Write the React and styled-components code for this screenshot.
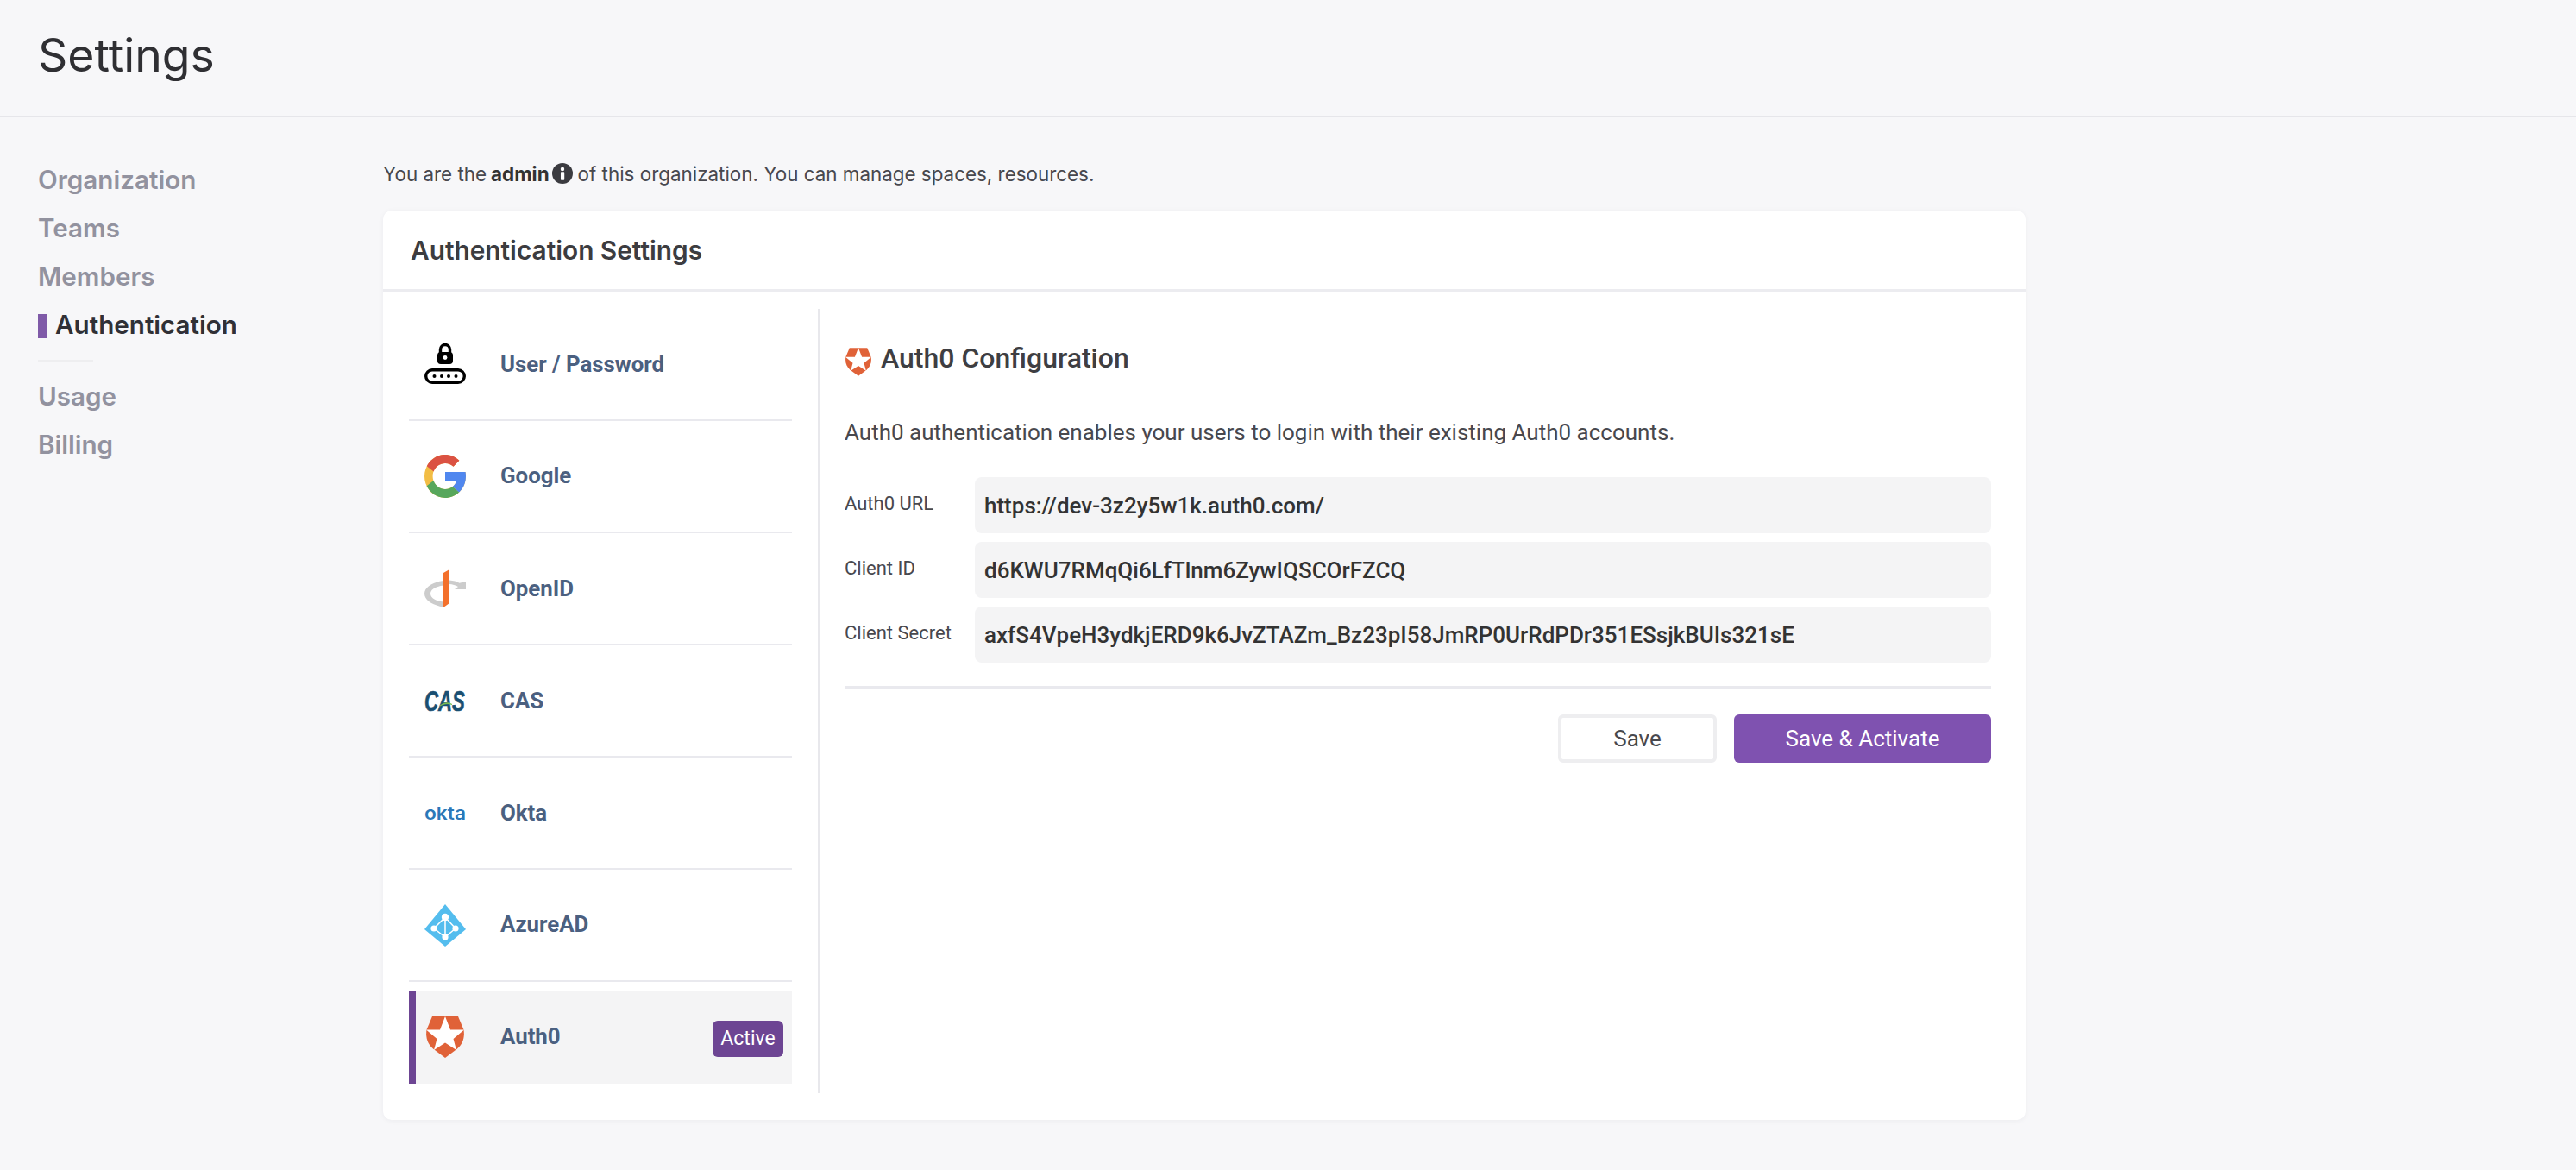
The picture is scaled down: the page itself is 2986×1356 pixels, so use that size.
import React from "react";
import styled, { createGlobalStyle } from "styled-components";

const GlobalStyle = createGlobalStyle`
  html, body {
    margin: 0;
    padding: 0;
    background: #f7f7f9;
    font-family: Inter, "Noto Sans", sans-serif;
    color: #333;
  }
  * { box-sizing: border-box; }
`;

const Page = styled.div`
  width: 100%;
  min-height: 100vh;
`;
const Header = styled.header`
  height: 136px;
  padding: 0 44px;
  display: flex;
  align-items: center;
  border-bottom: 2px solid #e6e6ea;
`;
const Title = styled.h1`
  margin: 0 0 6px;
  font-size: 53.5px;
  line-height: 68px;
  font-weight: 400;
  color: #2f2f33;
`;
const Body = styled.div`
  display: flex;
  padding-top: 44px;
`;
const SideNav = styled.nav`
  width: 400px;
  margin-left: 44px;
  flex-shrink: 0;
  display: flex;
  flex-direction: column;
`;
const NavItem = styled.a`
  height: 56px;
  display: flex;
  align-items: center;
  font-size: 29.6px;
  font-weight: 600;
  color: ${(p) => (p.$active ? "#303036" : "#92929f")};
  &::before {
    content: "";
    display: ${(p) => (p.$active ? "block" : "none")};
    width: 10px;
    height: 28px;
    margin: 4px 10px 0 0;
    background: #7f5aa8;
  }
`;
const NavDivider = styled.div`
  width: 64px;
  height: 3px;
  margin: 13px 0 11px;
  background: #eeeef0;
`;
const Main = styled.main`
  width: 1904px;
`;
const Intro = styled.p`
  margin: 0 0 22px;
  height: 42px;
  display: flex;
  align-items: center;
  font-size: 22.4px;
  color: #48484e;
  b {
    font-weight: 700;
    color: #333;
    margin: 0 3px 0 5px;
  }
  span { margin-left: 6px; }
  svg { flex-shrink: 0; }
`;
const Card = styled.section`
  background: #fff;
  border-radius: 10px;
  box-shadow: 0 1px 6px rgba(30, 30, 60, 0.05);
  height: 1054px;
`;
const CardHead = styled.div`
  height: 94px;
  padding: 0 32px;
  display: flex;
  align-items: center;
  border-bottom: 3px solid #ececf0;
  font-size: 29.8px;
  font-weight: 600;
  color: #3c3c40;
`;
const CardBody = styled.div`
  display: flex;
  padding: 20px 40px 0 30px;
`;
const List = styled.div`
  width: 476px;
  height: 909px;
  padding-right: 30px;
  border-right: 2px solid #e8e8ec;
  flex-shrink: 0;
`;
const Row = styled.div`
  height: 130px;
  display: flex;
  align-items: center;
  padding: 0 10px 0 18px;
  border-bottom: 2px solid #e9e9ee;
`;
const ActiveRow = styled(Row)`
  height: 108px;
  margin-top: 10px;
  padding-left: 10px;
  background: #f4f4f5;
  border-left: 8px solid #6d4593;
  border-bottom: 0;
`;
const RowIcon = styled.div`
  width: 48px;
  height: 50px;
  margin-right: 40px;
  display: flex;
  align-items: center;
  justify-content: center;
  flex-shrink: 0;
`;
const RowLabel = styled.span`
  flex: 1;
  margin-bottom: ${(p) => (p.$raised ? "3px" : "0")};
  font-family: Roboto, sans-serif;
  font-size: 25.8px;
  font-weight: 700;
  color: #4b6080;
`;
const Badge = styled.span`
  width: 82px;
  height: 42px;
  margin-top: 3px;
  display: flex;
  align-items: center;
  justify-content: center;
  border-radius: 6px;
  background: #6d4593;
  font-family: Roboto, sans-serif;
  font-size: 23px;
  color: #fff;
`;
const Config = styled.div`
  flex: 1;
  padding: 39px 0 0 29px;
  font-family: Roboto, sans-serif;
`;
const ConfigTitle = styled.h2`
  margin: 0;
  height: 36px;
  display: flex;
  align-items: center;
  gap: 11px;
  font-size: 32px;
  font-weight: 500;
  color: #3e3e42;
  svg {
    margin: 8px 0 0 1px;
    flex-shrink: 0;
  }
`;
const Description = styled.p`
  margin: 50px 0 0;
  height: 36px;
  line-height: 36px;
  font-size: 26px;
  color: #48484e;
`;
const Fields = styled.div`
  margin-top: 34px;
  display: flex;
  flex-direction: column;
  gap: 10px;
`;
const Field = styled.div`
  display: flex;
  align-items: center;
`;
const FieldLabel = styled.label`
  width: 151px;
  margin-bottom: 4px;
  font-size: 22px;
  font-weight: 400;
  color: #48484e;
  flex-shrink: 0;
`;
const FieldValue = styled.div`
  flex: 1;
  height: 65px;
  padding: 0 11px;
  display: flex;
  align-items: center;
  border-radius: 8px;
  background: #f4f4f5;
  font-size: 26px;
  font-weight: 500;
  color: #333;
`;
const Actions = styled.div`
  margin-top: 27px;
  padding-top: 30px;
  border-top: 3px solid #e9e9ee;
  display: flex;
  justify-content: flex-end;
  gap: 20px;
`;
const Button = styled.button`
  height: 56px;
  width: ${(p) => (p.$primary ? "298px" : "184px")};
  border: ${(p) => (p.$primary ? "0" : "4px solid #eeeef0")};
  border-radius: 6px;
  background: ${(p) => (p.$primary ? "#7f52b0" : "#fff")};
  color: ${(p) => (p.$primary ? "#fff" : "#48484e")};
  font-family: Roboto, sans-serif;
  font-size: 26px;
  padding: 0;
`;

const InfoIcon = () => (
  <svg width="24" height="24" viewBox="0 0 26 26">
    <circle cx="13" cy="13" r="13" fill="#3b3b40" />
    <circle cx="13" cy="7.5" r="2.4" fill="#fff" />
    <rect x="10.800" y="11" width="4.600" height="10.500" rx="0.8" fill="#fff" />
  </svg>
);

const LockIcon = () => (
  <svg width="48" height="48" viewBox="0 0 48 48">
    <path d="M18.500 12V7a5.500 5.500 0 0 1 11 0v5" fill="none" stroke="#000" strokeWidth="3.400" />
    <rect x="15" y="10" width="18" height="14" rx="4" fill="#000" />
    <circle cx="24" cy="16.500" r="2.400" fill="#fff" />
    <rect x="1.700" y="30.700" width="44.600" height="14.600" rx="7.300" fill="#fff" stroke="#000" strokeWidth="3.400" />
    <circle cx="11.500" cy="38" r="2" fill="#000" />
    <circle cx="20" cy="38" r="2" fill="#000" />
    <circle cx="28" cy="38" r="2" fill="#000" />
    <circle cx="36.500" cy="38" r="2" fill="#000" />
  </svg>
);

const GoogleIcon = () => (
  <svg width="48" height="50" viewBox="4 4 40 40" preserveAspectRatio="none">
    <path fill="#f2bd45" d="M43.611,20.083H42V20H24v8h11.303c-1.649,4.657-6.08,8-11.303,8c-6.627,0-12-5.373-12-12c0-6.627,5.373-12,12-12c3.059,0,5.842,1.154,7.961,3.039l5.657-5.657C34.046,6.053,29.268,4,24,4C12.955,4,4,12.955,4,24c0,11.045,8.955,20,20,20c11.045,0,20-8.955,20-20C44,22.659,43.862,21.35,43.611,20.083z" />
    <path fill="#db5243" d="M6.306,14.691l6.571,4.819C14.655,15.108,18.961,12,24,12c3.059,0,5.842,1.154,7.961,3.039l5.657-5.657C34.046,6.053,29.268,4,24,4C16.318,4,9.656,8.337,6.306,14.691z" />
    <path fill="#57a75c" d="M24,44c5.166,0,9.86-1.977,13.409-5.192l-6.19-5.238C29.211,35.091,26.715,36,24,36c-5.202,0-9.619-3.317-11.283-7.946l-6.522,5.025C9.505,39.556,16.227,44,24,44z" />
    <path fill="#5087ef" d="M43.611,20.083H42V20H24v8h11.303c-0.792,2.237-2.231,4.166-4.087,5.571c0.001-0.001,0.002-0.001,0.003-0.002l6.19,5.238C36.971,39.205,44,34,44,24C44,22.659,43.862,21.35,43.611,20.083z" />
  </svg>
);

const OpenIdIcon = () => (
  <svg width="48" height="44" viewBox="0 0 48 44">
    <path fill="#cccccc" d="M22 13C9.500 14.500 0 20.500 0 28c0 7.500 9.500 13.500 22 15.500v-6C13 36.500 7 33 7 28s6-8.500 15-9.500z" />
    <path fill="#cccccc" d="M29 12.500c4.500.3 8.500 1.500 11.500 3.300L48 14v9H35l4-3c-3-1.700-6.500-2.700-10-3z" />
    <path fill="#f3702b" d="M22 4 29 0v39l-7 5z" />
  </svg>
);

const CasText = styled.text`
  font-family: "Liberation Sans", sans-serif;
  font-size: 33px;
  font-weight: 700;
  font-style: italic;
  fill: #1a4f72;
  stroke: #1a4f72;
  stroke-width: 0.7px;
`;
const CasIcon = () => (
  <svg width="48" height="44" viewBox="0 0 48 44">
    <g transform="scale(0.67 1)">
      <CasText x="0" y="34">CAS</CasText>
    </g>
    <path d="M18 28c4-3.500 9-4.500 14-1.500-5-1.500-9-1-14 1.500z" fill="#7fc04f" stroke="#7fc04f" strokeWidth="0.8" />
  </svg>
);

const OktaText = styled.text`
  font-family: Inter, sans-serif;
  font-size: 20.5px;
  font-weight: 600;
  fill: #2b78b8;
`;
const OktaIcon = () => (
  <svg width="48" height="32" viewBox="0 0 48 32">
    <OktaText x="0" y="24" textLength="48" lengthAdjust="spacingAndGlyphs">okta</OktaText>
  </svg>
);

const AzureIcon = () => (
  <svg width="48" height="49" viewBox="0 0 48 49">
    <path fill="#54bdee" d="M24 0 48 29 24 49 0 29z" />
    <path fill="none" stroke="#fff" strokeWidth="1.500" d="M24 15 11 28 24 38 36 28zM24 15v23" />
    <circle cx="24" cy="15" r="4.200" fill="#fff" />
    <circle cx="11" cy="28" r="3.600" fill="#fff" />
    <circle cx="36" cy="28" r="3.600" fill="#fff" />
    <circle cx="24" cy="38" r="3.600" fill="#fff" />
  </svg>
);

const Auth0Icon = ({ width = 44, height = 48 }) => (
  <svg width={width} height={height} viewBox="0 0 44 48">
    <path fill="#e06238" d="M7 0h30l6.500 15.500C45 25 42 32 36 37.500L22 48 8 37.500C2 32-1 25 .5 15.500z" />
    <path fill="#fff" d="M22 0l6 15.500h16L31.500 26 35 39 22 30.500 9 39l3.500-13L0 15.500h16z" />
  </svg>
);

const providers = [
  { name: "User / Password", icon: <LockIcon /> },
  { name: "Google", icon: <GoogleIcon />, raised: true },
  { name: "OpenID", icon: <OpenIdIcon /> },
  { name: "CAS", icon: <CasIcon /> },
  { name: "Okta", icon: <OktaIcon /> },
  { name: "AzureAD", icon: <AzureIcon />, raised: true },
];

const fields = [
  { label: "Auth0 URL", value: "https://dev-3z2y5w1k.auth0.com/" },
  { label: "Client ID", value: "d6KWU7RMqQi6LfTlnm6ZywIQSCOrFZCQ" },
  { label: "Client Secret", value: "axfS4VpeH3ydkjERD9k6JvZTAZm_Bz23pI58JmRP0UrRdPDr351ESsjkBUIs321sE" },
];

const App = () => {
  return (
    <Page>
      <GlobalStyle />
      <Header>
        <Title>Settings</Title>
      </Header>
      <Body>
        <SideNav>
          <NavItem>Organization</NavItem>
          <NavItem>Teams</NavItem>
          <NavItem>Members</NavItem>
          <NavItem $active>Authentication</NavItem>
          <NavDivider />
          <NavItem>Usage</NavItem>
          <NavItem>Billing</NavItem>
        </SideNav>
        <Main>
          <Intro>
            You are the <b>admin</b>
            <InfoIcon />
            <span>of this organization. You can manage spaces, resources.</span>
          </Intro>
          <Card>
            <CardHead>Authentication Settings</CardHead>
            <CardBody>
              <List>
                {providers.map((p) => (
                  <Row key={p.name}>
                    <RowIcon>{p.icon}</RowIcon>
                    <RowLabel $raised={p.raised}>{p.name}</RowLabel>
                  </Row>
                ))}
                <ActiveRow>
                  <RowIcon>
                    <Auth0Icon />
                  </RowIcon>
                  <RowLabel $raised>Auth0</RowLabel>
                  <Badge>Active</Badge>
                </ActiveRow>
              </List>
              <Config>
                <ConfigTitle>
                  <Auth0Icon width={30} height={33} />
                  Auth0 Configuration
                </ConfigTitle>
                <Description>
                  Auth0 authentication enables your users to login with their existing Auth0 accounts.
                </Description>
                <Fields>
                  {fields.map((f) => (
                    <Field key={f.label}>
                      <FieldLabel>{f.label}</FieldLabel>
                      <FieldValue>{f.value}</FieldValue>
                    </Field>
                  ))}
                </Fields>
                <Actions>
                  <Button>Save</Button>
                  <Button $primary>Save &amp; Activate</Button>
                </Actions>
              </Config>
            </CardBody>
          </Card>
        </Main>
      </Body>
    </Page>
  );
};

export default App;
